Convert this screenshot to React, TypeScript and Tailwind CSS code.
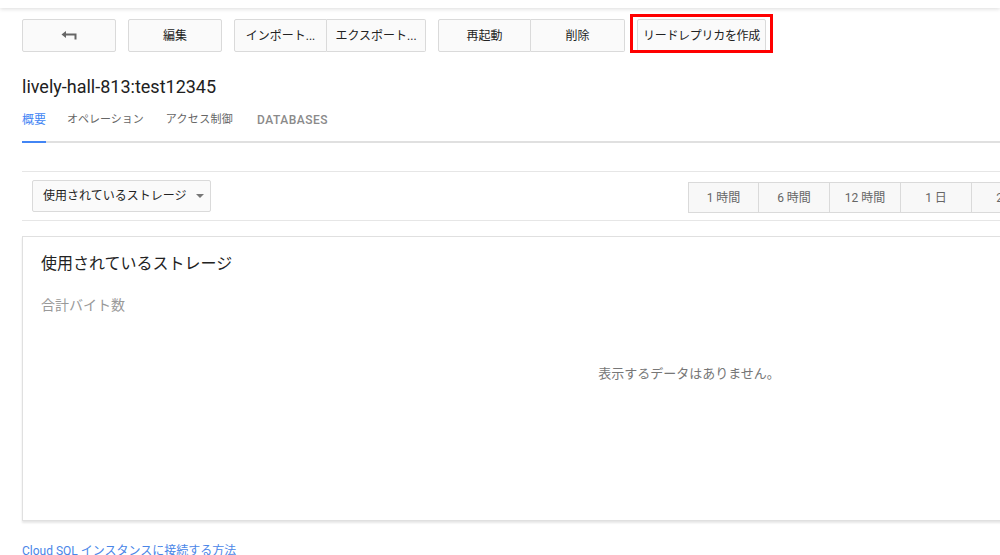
import React from 'react';

const timeRanges = ['1 時間', '6 時間', '12 時間', '1 日', '2 日', '4 日', '7 日', '14 日', '30 日'];

const tabs = ['概要', 'オペレーション', 'アクセス制御', 'DATABASES'];

const BackIcon: React.FC = () => (
  <svg width="16" height="10" viewBox="0 0 16 10" fill="none">
    <path d="M0.5 3.5 L5 0 L5 7 Z" fill="#666" />
    <path d="M4 3.5 H14.5 V8.5" stroke="#666" strokeWidth="2" />
  </svg>
);

const btn =
  'h-[33px] bg-[#fafafa] border border-[#dadada] text-[12px] text-[#222] whitespace-nowrap flex items-center justify-center';

const tabClass = (i: number) => {
  if (i === 0) return 'text-[12px] text-[#4285f4] border-b-2 border-[#4285f4] pb-[13px] mr-[21px]';
  if (i === 3) return 'text-[12px] text-[#8a8a8a] font-medium tracking-[0.5px] pb-[15px]';
  if (i === 2) return 'text-[11px] text-[#666] pb-[15px] mr-[24px] tracking-[0.3px]';
  return 'text-[11px] text-[#666] pb-[15px] mr-[22px]';
};

const App: React.FC = () => {
  return (
    <div
      className="w-[1000px] h-[555px] overflow-hidden bg-white"
      style={{ fontFamily: 'Roboto, "Noto Sans CJK JP", sans-serif' }}
    >
      <div className="h-2 bg-white shadow-[0_1px_4px_rgba(0,0,0,0.14)]" />

      <div className="w-[1400px] pl-[22px]">
        {/* action bar */}
        <div className="flex items-center gap-3 mt-[11px]">
          <button className={`${btn} w-[94px] rounded-[2px]`}>
            <BackIcon />
          </button>
          <button className={`${btn} w-[94px] rounded-[2px]`}>編集</button>
          <div className="flex">
            <button className={`${btn} w-[93px] rounded-l-[2px]`}>インポート...</button>
            <button className={`${btn} w-[99px] border-l-0 rounded-r-[2px]`}>エクスポート...</button>
          </div>
          <div className="flex">
            <button className={`${btn} w-[93px] rounded-l-[2px]`}>再起動</button>
            <button className={`${btn} w-[94px] border-l-0 rounded-r-[2px]`}>削除</button>
          </div>
          <div className="relative">
            <button className={`${btn} w-[129px] rounded-[2px] tracking-[-0.3px]`}>リードレプリカを作成</button>
            <div className="absolute -left-[7px] -top-[5px] -right-[7px] -bottom-[1px] border-[3px] border-[#ff0000]" />
          </div>
        </div>

        {/* title */}
        <h1 className="mt-[23px] text-[18px] leading-[24px] text-[#212121]">lively-hall-813:test12345</h1>

        {/* tabs */}
        <div className="mt-[13px] flex items-end border-b-2 border-[#e0e0e0]">
          {tabs.map((t, i) => (
            <div key={t} className={`leading-[16px] -mb-[2px] ${tabClass(i)}`}>
              {t}
            </div>
          ))}
        </div>

        {/* chart toolbar */}
        <div className="mt-[28px] border-t border-b border-[#e6e6e6] h-[50px] flex items-center pl-[10px]">
          <button className="h-[32px] w-[179px] bg-[#fafafa] border border-[#dadada] rounded-[2px] flex items-center pl-[10px] text-[12px] text-[#222] whitespace-nowrap">
            使用されているストレージ
            <svg className="ml-[10px]" width="8" height="4" viewBox="0 0 8 4">
              <path d="M0 0 H8 L4 4 Z" fill="#777" />
            </svg>
          </button>
          <div className="flex ml-[477px] mt-[3px]">
            {timeRanges.map((r, i) => (
              <div
                key={r}
                className={`h-[31px] w-[71px] bg-[#f8f8f8] border border-[#dadada] flex items-center justify-center text-[12px] text-[#666] whitespace-nowrap ${
                  i > 0 ? 'border-l-0' : ''
                }`}
              >
                {r}
              </div>
            ))}
          </div>
        </div>

        {/* chart card */}
        <div className="mt-[15px] w-[1334px] h-[285px] border border-[#e0e0e0] shadow-[0_2px_2px_rgba(0,0,0,0.1)] pl-[18px] pt-[15px] relative">
          <div className="text-[16px] leading-[24px] text-[#222]">使用されているストレージ</div>
          <div className="mt-[19px] text-[14px] leading-[20px] text-[#999]">合計バイト数</div>
          <div className="absolute left-0 right-0 top-[127px] text-center text-[13px] text-[#777]">
            表示するデータはありません。
          </div>
        </div>

        <a className="block mt-[21px] text-[12px] leading-[18px] text-[#4a86e8]">Cloud SQL インスタンスに接続する方法</a>
      </div>
    </div>
  );
};

export default App;
